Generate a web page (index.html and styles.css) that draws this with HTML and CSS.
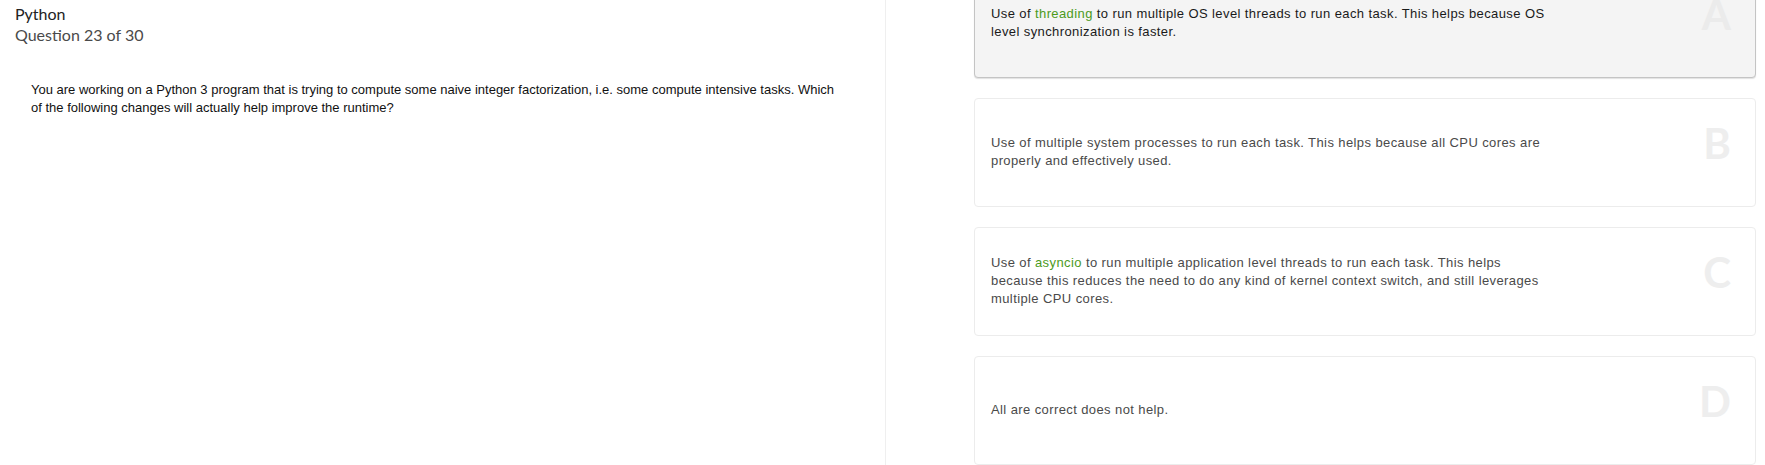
FILE: index.html
```html
<!DOCTYPE html>
<html lang="en">
<head>
    <meta charset="UTF-8">
    <title>Python - Question 23 of 30</title>
    <link rel="stylesheet" href="styles.css">
</head>
<body>
    <div class="page">
        <div class="left">
            <div class="header">
                <div class="subject">Python</div>
                <div class="count">Question 23 of 30</div>
            </div>
            <div class="question">
                You are working on a Python 3 program that is trying to compute some naive integer factorization, i.e. some compute intensive tasks. Which of the following changes will actually help improve the runtime?
            </div>
        </div>

        <div class="right">
            <div class="options">
                <div class="option selected">
                    <div class="text">Use of <span class="code">threading</span> to run multiple OS level threads to run each task. This helps because OS level synchronization is faster.</div>
                    <div class="letter">A</div>
                </div>
                <div class="option">
                    <div class="text">Use of multiple system processes to run each task. This helps because all CPU cores are properly and effectively used.</div>
                    <div class="letter">B</div>
                </div>
                <div class="option">
                    <div class="text">Use of <span class="code">asyncio</span> to run multiple application level threads to run each task. This helps because this reduces the need to do any kind of kernel context switch, and still leverages multiple CPU cores.</div>
                    <div class="letter">C</div>
                </div>
                <div class="option">
                    <div class="text">All are correct does not help.</div>
                    <div class="letter">D</div>
                </div>
            </div>
        </div>
    </div>
</body>
</html>
```
FILE: styles.css
```css
body {
    margin: 0;
    background: #fff;
    font-family: "Liberation Sans", Arial, sans-serif;
}

.page {
    display: flex;
    height: 465px;
    overflow: hidden;
}

/* left column: subject + question */
.left {
    width: 885px;
    flex-shrink: 0;
    border-right: 1px solid #efefef;
}

.header {
    padding: 3px 15px 0 15px;
    font-family: Lato, "Open Sans", sans-serif;
    font-size: 16px;
    line-height: 21px;
    color: #3a3a3a;
}

.subject {
    color: #222;
}

.count {
    color: #4a4a4a;
}

.question {
    margin-top: 36px;
    padding: 0 40px 0 31px;
    font-size: 13px;
    line-height: 18px;
    color: #111;
}

/* right column: answer cards */
.right {
    flex: 1;
    padding: 0 9px 0 88px;
}

.options {
    display: flex;
    flex-direction: column;
    gap: 20px;
    margin-top: -31px;
}

.option {
    display: flex;
    align-items: center;
    height: 109px;
    box-sizing: border-box;
    padding: 0 24px 1px 16px;
    border: 1px solid #ececec;
    border-radius: 4px;
    background: #fff;
}

.option.selected {
    background: #f4f4f4;
    border-color: #c4c4c4;
    box-shadow: 0 1px 1px rgba(0, 0, 0, 0.12);
}

.text {
    width: 560px;
    font-size: 13px;
    line-height: 18px;
    letter-spacing: 0.4px;
    color: #4a4a4a;
}

.selected .text {
    color: #1a1a1a;
}

.code {
    color: #4c9a1c;
}

.letter {
    margin-left: auto;
    align-self: flex-start;
    margin-top: 22px;
    font-family: Lato, "Open Sans", sans-serif;
    font-weight: 700;
    font-size: 42px;
    line-height: 44px;
    color: #eeeeee;
}

.selected .letter {
    color: #ebebeb;
}
```
